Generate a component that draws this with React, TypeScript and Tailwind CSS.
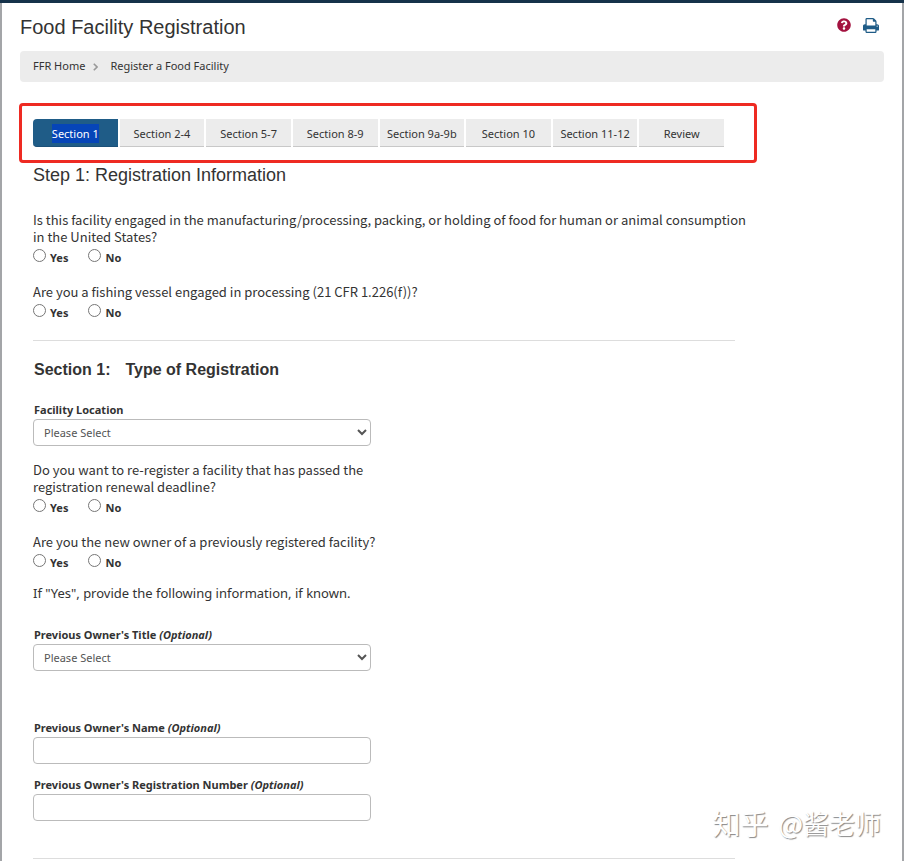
import { useState } from 'react';
import { FaQuestionCircle } from 'react-icons/fa';

const TABS = [
  'Section 1', 'Section 2-4', 'Section 5-7', 'Section 8-9',
  'Section 9a-9b', 'Section 10', 'Section 11-12', 'Review',
];

const LOCATIONS = ['Domestic', 'Foreign'];
const TITLES = ['Mr.', 'Mrs.', 'Ms.', 'Dr.'];

export default function App() {
  const [activeTab, setActiveTab] = useState('Section 1');

  return (
    <div className="relative min-h-screen border-t-3 border-t-[#16324a] bg-white font-['Noto_Sans',sans-serif] text-[#333]">
      <div className="min-h-[858px] border-x-2 border-x-[#a3a5a8] pr-[18px] pl-[18px]">
        <header className="flex items-center justify-between pt-[10px]">
          <h1 className="font-['Liberation_Sans',sans-serif] text-[20px] leading-7">Food Facility Registration</h1>
          <div className="flex items-center gap-3 pr-[5px] pb-1">
            <button type="button" aria-label="Help" className="text-[#a3123f]">
              <FaQuestionCircle size={14} />
            </button>
            <button type="button" aria-label="Print" className="text-[#1f5c87]">
              <PrintIcon />
            </button>
          </div>
        </header>

        <nav aria-label="Breadcrumb" className="mt-[10px] flex h-[31px] items-center rounded-sm bg-[#ececec] px-[13px] text-[11px]">
          <a href="#home">FFR Home</a>
          <svg viewBox="0 0 5 8" className="mr-3 ml-2 h-2 w-[5px]" fill="none" stroke="#999" strokeWidth="1.6">
            <path d="M0.8 0.8 4 4 0.8 7.2" />
          </svg>
          <a href="#register">Register a Food Facility</a>
        </nav>

        {/* Section tabs */}
        <div className="mt-[21px] -ml-px max-w-[738px] rounded-sm border-3 border-[#ee2a22] pt-[13px] pr-[30px] pb-[13px] pl-[11px]">
          <div className="grid grid-cols-8 gap-0.5">
            {TABS.map((tab) => (
              <button
                key={tab}
                type="button"
                onClick={() => setActiveTab(tab)}
                className={`h-7 border-b pt-1 text-[11px] whitespace-nowrap ${
                  tab === activeTab
                    ? 'rounded-l-sm border-[#1b5078] bg-[#1f5c87] text-white'
                    : 'border-[#c8c8c8] bg-[#ececec]'
                }`}
              >
                <span className={tab === activeTab ? 'bg-[#0645b8] py-0.5' : ''}>{tab}</span>
              </button>
            ))}
          </div>
        </div>

        <form className="ml-[13px] max-w-[702px]">
          <h2 className="font-['Liberation_Sans',sans-serif] text-[18px] leading-6">Step 1: Registration Information</h2>

          <YesNo
            name="consumption"
            className="mt-6"
            question="Is this facility engaged in the manufacturing/processing, packing, or holding of food for human or animal consumption in the United States?"
          />
          <YesNo name="vessel" className="mt-[17px]" question="Are you a fishing vessel engaged in processing (21 CFR 1.226(f))?" />

          <hr className="mt-[19px] border-[#ddd]" />

          <h3 className="mt-[17px] flex gap-[15px] pl-px font-['Liberation_Sans',sans-serif] text-[16px] leading-6 font-bold">
            <span>Section 1:</span>
            <span>Type of Registration</span>
          </h3>

          <div className="max-w-[338px]">
            <SelectField id="location" label="Facility Location" options={LOCATIONS} className="mt-[19px]" />
            <YesNo
              name="reregister"
              className="mt-[15px]"
              question="Do you want to re-register a facility that has passed the registration renewal deadline?"
            />
            <YesNo name="new-owner" className="mt-[17px]" question="Are you the new owner of a previously registered facility?" />
            <p className="mt-[14px] text-[13px] leading-[17px] whitespace-nowrap">
              If "Yes", provide the following information, if known.
            </p>
            <SelectField id="owner-title" label="Previous Owner's Title" optional options={TITLES} className="mt-6" />
            <TextField id="owner-name" label="Previous Owner's Name" className="mt-12" />
            <TextField id="owner-number" label="Previous Owner's Registration Number" className="mt-3" />
          </div>

          <hr className="mt-[37px] border-[#ddd]" />
        </form>
      </div>

      <div className="pointer-events-none absolute right-[23px] bottom-5 flex items-center gap-2.5 font-['Noto_Sans_CJK_SC',sans-serif] text-[26px] leading-9 text-white [text-shadow:1px_1px_1px_#888]">
        <span className="text-[28px]">知乎</span>
        <span>@酱老师</span>
      </div>
    </div>
  );
}

function YesNo({ name, question, className }: { name: string; question: string; className: string }) {
  return (
    <fieldset className={className}>
      <legend className="-mr-4 font-['Noto_Sans_CJK_SC',sans-serif] text-[13px] leading-[17px]">{question}</legend>
      <div className="mt-1 flex gap-5 text-[11px] leading-[17px] font-bold">
        {['Yes', 'No'].map((answer) => (
          <label key={answer} className="flex items-start gap-1">
            <input type="radio" name={name} value={answer} className="h-[13px] w-[13px]" />
            {answer}
          </label>
        ))}
      </div>
    </fieldset>
  );
}

interface FieldLabelProps {
  id: string;
  label: string;
  optional?: boolean;
}

function FieldLabel({ id, label, optional }: FieldLabelProps) {
  return (
    <label htmlFor={id} className="block pl-px text-[11px] leading-[17px] font-bold whitespace-nowrap">
      {label} {optional && <em>(Optional)</em>}
    </label>
  );
}

function SelectField({ id, label, optional, options, className }: FieldLabelProps & { options: string[]; className: string }) {
  return (
    <div className={className}>
      <FieldLabel id={id} label={label} optional={optional} />
      <select id={id} className="mt-px block h-[27px] w-full rounded-sm border border-[#bbb] pl-1.5 text-[11px] text-[#555]">
        <option>Please Select</option>
        {options.map((option) => (
          <option key={option}>{option}</option>
        ))}
      </select>
    </div>
  );
}

function TextField({ id, label, className }: { id: string; label: string; className: string }) {
  return (
    <div className={className}>
      <FieldLabel id={id} label={label} optional />
      <input id={id} type="text" className="mt-px block h-[27px] w-full rounded-sm border border-[#bbb] px-2 text-[11px]" />
    </div>
  );
}

function PrintIcon() {
  return (
    <svg viewBox="64 128 1664 1536" className="h-[15px] w-4" fill="currentColor">
      <path d="M448 1536h896v-256h-896v256zm0-640h896v-384h-160q-40 0-68-28t-28-68v-160h-640v640zm1152 64q0-26-19-45t-45-19-45 19-19 45 19 45 45 19 45-19 19-45zm128 0v416q0 13-9.500 22.500t-22.500 9.500h-224v160q0 40-28 68t-68 28h-960q-40 0-68-28t-28-68v-160h-224q-13 0-22.500-9.500t-9.500-22.500v-416q0-79 56.500-135.500t135.500-56.500h64v-544q0-40 28-68t68-28h672q40 0 88 20t76 48l152 152q28 28 48 76t20 88v256h64q79 0 135.500 56.500t56.500 135.500z" />
    </svg>
  );
}
